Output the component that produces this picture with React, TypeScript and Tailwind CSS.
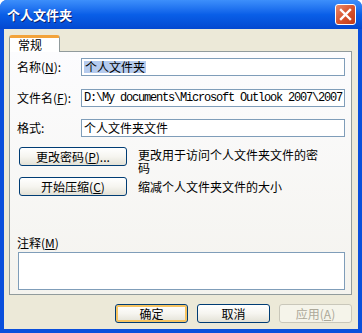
import React from 'react';

const cn = '"Noto Sans CJK SC", "Liberation Sans", sans-serif';

const Key: React.FC<{ k: string }> = ({ k }) => (
  <span>
    (<span className="underline underline-offset-1">{k}</span>)
  </span>
);

const XpButton: React.FC<{
  children: React.ReactNode;
  className?: string;
  isDefault?: boolean;
  disabled?: boolean;
}> = ({ children, className = '', isDefault, disabled }) => (
  <div
    className={
      'flex h-[19px] shrink-0 items-center justify-center rounded-[3px] border text-[12px] leading-none ' +
      (disabled
        ? 'border-[#c9c7ba] bg-[#f5f4ea] text-[#aca899] '
        : 'border-[#003c74] bg-gradient-to-b from-white via-[#f6f5f0] to-[#e3e1d6] text-black ') +
      (isDefault ? 'shadow-[inset_0_0_0_2px_#f6c462] ' : '') +
      className
    }
  >
    {children}
  </div>
);

const Field: React.FC<{ label: React.ReactNode; children: React.ReactNode; className?: string }> = ({
  label,
  children,
  className = '',
}) => (
  <div className={'flex items-center ' + className}>
    <div className="w-[64px] text-[12px] leading-none">{label}</div>
    <div className="flex h-[18px] flex-1 items-center border border-[#7f9db9] bg-white px-[2px] text-[12px] leading-none">
      {children}
    </div>
  </div>
);

export default function App() {
  return (
    <div
      className="flex h-[333px] w-[362px] flex-col overflow-hidden rounded-t-[7px] bg-[#0a4fdc] text-black"
      style={{ fontFamily: cn }}
    >
      {/* title bar */}
      <div className="relative flex h-[29px] shrink-0 items-center bg-gradient-to-b from-[#3d8ffb] via-[#0a5fe8] to-[#0448d0] pl-[7px] pr-[6px]">
        <span className="text-[13px] font-bold text-white [text-shadow:1px_1px_0_#0a1e6e]">个人文件夹</span>
        <div className="ml-auto flex h-[21px] w-[21px] items-center justify-center rounded-[3px] border border-white bg-gradient-to-br from-[#e98a6c] via-[#d8542e] to-[#c13a17]">
          <svg width="13" height="13" viewBox="0 0 13 13">
            <path d="M2 2 L11 11 M11 2 L2 11" stroke="white" strokeWidth="2.4" strokeLinecap="square" />
          </svg>
        </div>
      </div>

      {/* client area */}
      <div className="mx-[4px] mb-[4px] flex flex-1 flex-col bg-[#ece9d8] px-[5px] pr-[6px] pt-[6px]">
        {/* tab */}
        <div className="flex">
          <div className="relative z-10 -mb-px flex h-[17px] w-[51px] items-center rounded-t-[3px] border-x border-t-[3px] border-x-[#919b9c] border-t-[#f3a33a] bg-white pl-[8px] text-[12px] leading-none">
            常规
          </div>
        </div>

        {/* panel */}
        <div className="flex h-[244px] flex-col border border-[#919b9c] bg-gradient-to-b from-[#fcfcfe] to-[#f4f3ee] pl-[7px] pr-[6px] pt-[6px]">
          <Field label={<>名称<Key k="N" />:</>}>
            <span className="bg-[#b5cbee] px-[1px]">个人文件夹</span>
          </Field>
          <Field className="mt-[13px]" label={<>文件名<Key k="F" />:</>}>
            <span
              className="whitespace-nowrap text-[12px] tracking-[-1.2px]"
              style={{ fontFamily: '"Liberation Mono", monospace' }}
            >
              D:\My documents\Microsoft Outlook 2007\2007
            </span>
          </Field>
          <Field className="mt-[12px]" label="格式:">
            个人文件夹文件
          </Field>

          <div className="mt-[10px] flex h-[19px] items-start">
            <XpButton className="ml-[2px] w-[108px]">
              更改密码<Key k="P" />...
            </XpButton>
            <div className="ml-[11px] mt-[1px] w-[184px] text-[12px] leading-[13px]">
              更改用于访问个人文件夹文件的密码
            </div>
          </div>
          <div className="mt-[11px] flex items-center">
            <XpButton className="ml-[2px] w-[108px]">
              开始压缩 <Key k="C" />
            </XpButton>
            <div className="ml-[11px] text-[12px] leading-none">缩减个人文件夹文件的大小</div>
          </div>

          <div className="mt-[41px] text-[12px] leading-none">
            注释<Key k="M" />
          </div>
          <div className="mt-[3px] ml-[1px] h-[38px] border border-[#7f9db9] bg-white" />
        </div>

        {/* bottom buttons */}
        <div className="mt-[9px] flex justify-end gap-[9px]">
          <XpButton isDefault className="w-[73px]">确定</XpButton>
          <XpButton className="w-[73px]">取消</XpButton>
          <XpButton disabled className="w-[73px]">
            应用<Key k="A" />
          </XpButton>
        </div>
      </div>
    </div>
  );
}
